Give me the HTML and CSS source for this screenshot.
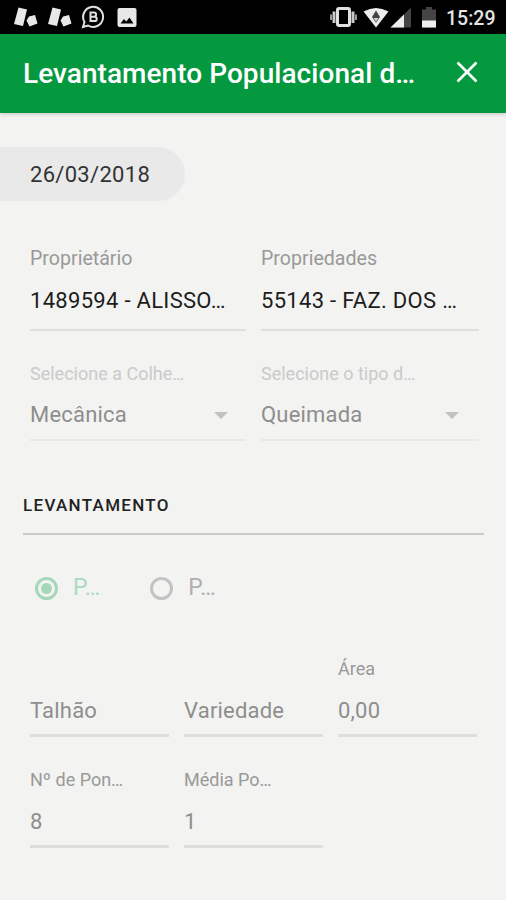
FILE: index.html
```html
<!DOCTYPE html>
<html lang="pt-BR">
<head>
    <meta charset="UTF-8">
    <meta name="viewport" content="width=device-width, initial-scale=1.0">
    <title>Levantamento Populacional</title>
    <link rel="stylesheet" href="styles.css">
</head>
<body>
    <div class="status-bar">
        <svg class="status-left" width="140" height="34" viewBox="0 0 140 34">
            <g fill="#e8e8e8">
                <path d="M18.500 7.500l8.500 2-4 16.500-9-2zM29 16.500l6-1.500 2.500 8.500-8 3-3-6z"/>
                <path d="M52.500 7.500l8.500 2-4 16.500-9-2zM63 16.500l6-1.500 2.500 8.500-8 3-3-6z"/>
                <path fill-rule="evenodd" d="M119.500 8h15a2 2 0 0 1 2 2v15a2 2 0 0 1-2 2h-15a2 2 0 0 1-2-2v-15a2 2 0 0 1 2-2zM120.500 23.500h13l-4-6-3.200 4-2.300-2.500z"/>
            </g>
            <path d="M83 27l1.500-5a10 10 0 1 1 3.500 3.500z" fill="none" stroke="#e0e0e0" stroke-width="2"/>
            <path d="M90.500 12.500h3.500a2 2 0 0 1 0 4.200h-3.500zM90.500 16.700h4a2.200 2.200 0 0 1 0 4.400h-4z" fill="none" stroke="#e0e0e0" stroke-width="2"/>
        </svg>
        <svg class="status-right" width="112" height="34" viewBox="0 0 112 34">
            <rect x="7.500" y="8.500" width="12" height="17" rx="1.500" fill="none" stroke="#e0e0e0" stroke-width="3"/>
            <path d="M4 11.500v11.500M23 11.500v11.500" stroke="#c8c8c8" stroke-width="3"/>
            <path d="M1 14.500v5.500M26 14.500v5.500" stroke="#999" stroke-width="2"/>
            <path d="M33.500 11.500Q46 4.500 58.500 11.500L46 27.500z" fill="#eee"/>
            <path d="M46 10.500l4 6.500-4 6-4-6z" fill="#444"/>
            <path d="M43.500 18h5l-2.500 4z" fill="#ccc"/>
            <path d="M81 7.500v20H60.500z" fill="#444"/>
            <path d="M74 14.500v13H60.500z" fill="#eee"/>
            <path d="M92 9.500h4v-2.500h6v2.500h4v18h-14z" fill="#444"/>
            <path d="M92 20.500h14v7h-14z" fill="#eee"/>
        </svg>
        <span class="clock">15:29</span>
    </div>

    <header class="toolbar">
        <h1>Levantamento Populacional d…</h1>
        <svg class="close" width="22" height="22" viewBox="0 0 22 22">
            <path d="M1.500 1.500l19 19M20.500 1.500l-19 19" stroke="#fff" stroke-width="2.600"/>
        </svg>
    </header>

    <main>
        <div class="date">26/03/2018</div>

        <div class="row owner">
            <div class="field">
                <label>Proprietário</label>
                <div class="value">1489594 - ALISSO…</div>
            </div>
            <div class="field">
                <label>Propriedades</label>
                <div class="value">55143 - FAZ. DOS …</div>
            </div>
        </div>

        <div class="row selects">
            <div class="field">
                <label>Selecione a Colhe…</label>
                <div class="value">Mecânica <span class="arrow"></span></div>
            </div>
            <div class="field">
                <label>Selecione o tipo d…</label>
                <div class="value">Queimada <span class="arrow"></span></div>
            </div>
        </div>

        <h2>LEVANTAMENTO</h2>

        <div class="radios">
            <div class="radio checked"><span class="circle"></span>P…</div>
            <div class="radio"><span class="circle"></span>P…</div>
        </div>

        <div class="row numbers">
            <div class="field">
                <label></label>
                <div class="value">Talhão</div>
            </div>
            <div class="field">
                <label></label>
                <div class="value">Variedade</div>
            </div>
            <div class="field">
                <label>Área</label>
                <div class="value">0,00</div>
            </div>
            <div class="field">
                <label>Nº de Pon…</label>
                <div class="value">8</div>
            </div>
            <div class="field">
                <label>Média Po…</label>
                <div class="value">1</div>
            </div>
        </div>
    </main>
</body>
</html>
```
FILE: styles.css
```css
* {
    box-sizing: border-box;
}

body {
    margin: 0;
    height: 900px;
    overflow: hidden;
    background-color: #f3f3f1;
    font-family: Roboto, "Liberation Sans", sans-serif;
    color: #222;
}

.status-bar {
    display: flex;
    align-items: center;
    height: 34px;
    background-color: #000;
}

.status-right {
    margin-left: 190px;
}

.clock {
    margin: 2px 0 0 4px;
    font-size: 19.5px;
    font-weight: 500;
    color: #e4e4e4;
}

.toolbar {
    display: flex;
    align-items: center;
    justify-content: space-between;
    height: 79px;
    padding: 0 28px 0 23px;
    background-color: #04983f;
    box-shadow: 0 1px 4px rgba(0, 0, 0, 0.2);
}

h1 {
    margin: 0;
    font-size: 28px;
    font-weight: 500;
    line-height: 32px;
    letter-spacing: 0.05px;
    color: #fff;
    white-space: nowrap;
}

.close {
    margin-bottom: 4px;
}

main {
    padding-top: 34px;
}

.date {
    width: 185px;
    height: 54px;
    padding-left: 30px;
    border-radius: 0 27px 27px 0;
    background-color: #e9e9e9;
    font-size: 22px;
    line-height: 55px;
    letter-spacing: 0.3px;
    color: #333;
}

.row {
    display: grid;
    grid-template-columns: 216px 218px;
    column-gap: 15px;
    padding-left: 30px;
}

.field {
    border-bottom: 2px solid #dededd;
    white-space: nowrap;
}

label {
    display: block;
    height: 24px;
    font-size: 18px;
    line-height: 24px;
    color: #999;
}

.value {
    margin-top: 17px;
    font-size: 22px;
    line-height: 28px;
    letter-spacing: 0.2px;
    color: #8e8e8e;
}

.owner {
    margin-top: 45px;
}

.owner label {
    font-size: 19.6px;
    line-height: 25px;
}

.owner .value {
    padding-bottom: 14px;
    letter-spacing: 0.3px;
    color: #1c1c1c;
}

.selects {
    margin-top: 31px;
}

.selects .field {
    border-color: #e8e8e7;
}

.selects label {
    color: #cacaca;
}

.selects .value {
    display: flex;
    align-items: center;
    justify-content: space-between;
    margin-top: 15px;
    padding: 0 18px 10px 0;
}

.selects .field:last-child .value {
    padding-right: 20px;
}

.arrow {
    border: 7px solid transparent;
    border-top-color: #c2c2c2;
    border-bottom: 0;
}

h2 {
    margin: 52px 22px 0 23px;
    padding-bottom: 16px;
    border-bottom: 2px solid #cbcbca;
    font-size: 17px;
    font-weight: 500;
    line-height: 24px;
    letter-spacing: 1.3px;
}

.radios {
    display: flex;
    gap: 49px;
    padding: 39px 0 0 35px;
}

.radio {
    display: flex;
    align-items: center;
    font-size: 23px;
    line-height: 28px;
    letter-spacing: 1px;
    color: #b0b0b0;
}

.circle {
    width: 23px;
    height: 23px;
    margin-right: 15px;
    border: 3px solid #c3c3c3;
    border-radius: 50%;
}

.checked {
    color: #a9dbbe;
}

.checked .circle {
    padding: 3px;
    border-color: #a5d8bb;
    background-color: #a5d8bb;
    background-clip: content-box;
}

.numbers {
    grid-template-columns: repeat(3, 139px);
    row-gap: 31px;
    margin-top: 55px;
}

.numbers .field {
    border-bottom-width: 3px;
}

.numbers .value {
    margin-top: 16px;
    padding-bottom: 9px;
}
```
